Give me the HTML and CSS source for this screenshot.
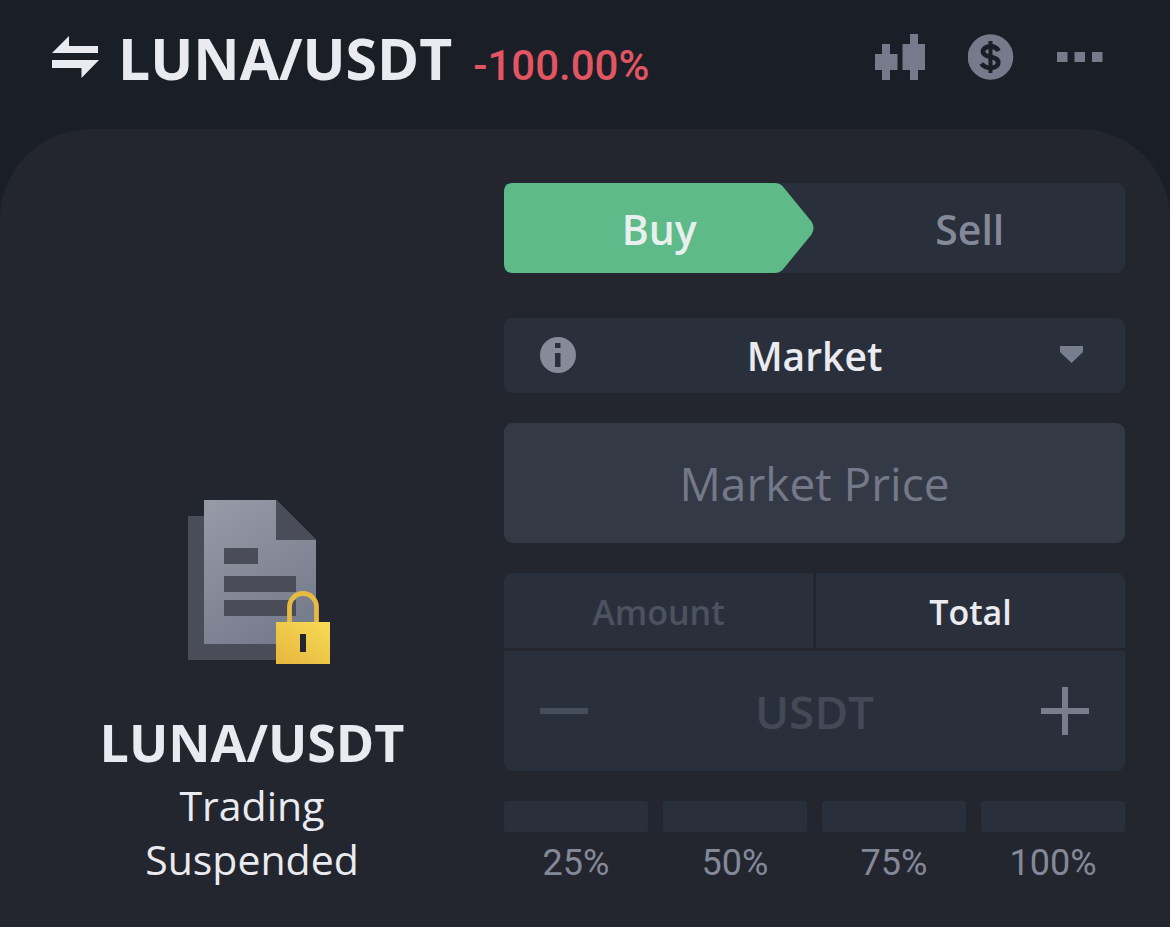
FILE: index.html
```html
<!DOCTYPE html>
<html lang="en">
<head>
<meta charset="utf-8">
<meta name="viewport" content="width=device-width, initial-scale=1">
<title>LUNA/USDT</title>
<link rel="stylesheet" href="styles.css">
</head>
<body>
<header class="topbar">
  <button class="icon-button" type="button" aria-label="Switch pair">
    <svg width="48" height="44" viewBox="0 0 48 44" fill="currentColor"><path d="M0 18 17 1V11H46V18ZM0 25H47L29.500 43V33H0Z"/></svg>
  </button>
  <h1 class="pair">LUNA/USDT</h1>
  <span class="change">-100.00%</span>
  <nav class="actions" aria-label="Tools">
    <button class="icon-button" type="button" aria-label="Chart">
      <svg width="50" height="46" viewBox="0 0 50 46" fill="currentColor"><path d="M7 10h8v10h7.500v16H15v10H7V36H0V20h7ZM35 0h8v10h7v26h-7v10h-8V36h-7.500V10H35Z"/></svg>
    </button>
    <button class="icon-button" type="button" aria-label="Currency">
      <svg width="46" height="46" viewBox="0 0 46 46"><circle cx="22.500" cy="23" r="22.800" fill="currentColor"/><path d="M30.500 17C29 14 26 12.500 22.500 12.500C18 12.500 15 14.500 15 17.500C15 21 18 22 22.500 22.800C27 23.600 30.200 24.800 30.200 28.400C30.200 31.700 27 33.800 22.500 33.800C18.500 33.800 15.300 32.300 13.500 29.500" fill="none" stroke="#1a1e26" stroke-width="4.800"/><path d="M22.500 7v32" stroke="#1a1e26" stroke-width="4"/></svg>
    </button>
    <button class="icon-button" type="button" aria-label="More">
      <svg width="46" height="46" viewBox="0 0 46 46" fill="currentColor"><path d="M0 18h10.500v10H0ZM17.500 18H28v10H17.500ZM35 18h10.500v10H35Z"/></svg>
    </button>
  </nav>
</header>
<main class="panel">
  <section class="notice">
    <svg class="notice-art" width="164" height="164" viewBox="0 0 164 164">
      <defs>
        <linearGradient id="paper" x1="0" y1="0" x2="0.500" y2="1"><stop offset="0" stop-color="#969ba8"/><stop offset="1" stop-color="#777d8c"/></linearGradient>
        <linearGradient id="gold" x1="1" y1="0" x2="0.200" y2="1"><stop offset="0" stop-color="#f8db56"/><stop offset="1" stop-color="#e7b93f"/></linearGradient>
      </defs>
      <path d="M18 16h92v144H18Z" fill="#4a4d57"/>
      <path d="M34 0h72l40 40v104H34Z" fill="url(#paper)"/>
      <path d="M106 0l40 40h-40ZM54 48h34v16H54ZM54 76h72v16H54ZM54 100h72v16H54Z" fill="#4a4d57"/>
      <path d="M119.500 123v-16a13.500 13.500 0 0 1 27 0v16" fill="none" stroke="#e7bb43" stroke-width="4.800"/>
      <path d="M106 122h54v42h-54Z" fill="url(#gold)"/>
      <path d="M130 134h6v18h-6Z" fill="#23262f"/>
    </svg>
    <h2 class="notice-pair">LUNA/USDT</h2>
    <p class="notice-text">Trading<br>Suspended</p>
  </section>
  <form class="order">
    <div class="sides">
      <button class="side side-buy" type="button">
        <svg class="side-shape" viewBox="0 0 310 90" preserveAspectRatio="none" aria-hidden="true"><path d="M9 0H270Q275 0 278 3L307 38.500Q311 45 307 51.500L278 87Q275 90 270 90H9Q0 90 0 81V9Q0 0 9 0Z" fill="#5fba89"/></svg>
        <span class="side-label">Buy</span>
      </button>
      <button class="side" type="button">Sell</button>
    </div>
    <div class="kind">
      <svg width="36" height="38" viewBox="0 0 36 38"><circle cx="18" cy="18" r="18" fill="#868b99"/><path d="M15 6h5.500v5H15ZM15 16h5.500v14H15Z" fill="#2a303b"/></svg>
      <select class="kind-select" aria-label="Order type"><option>Market</option></select>
      <svg class="caret" width="24" height="20" viewBox="0 0 24 20"><path d="M0 0H23V6L11.500 17 0 6Z" fill="#777e8d"/></svg>
    </div>
    <input class="price" type="text" placeholder="Market Price" aria-label="Price" disabled>
    <div class="quantity">
      <button class="unit" type="button">Amount</button>
      <button class="unit unit-active" type="button">Total</button>
      <div class="stepper">
        <button class="icon-button minus" type="button" aria-label="Decrease"><svg width="48" height="48" viewBox="0 0 48 48"><path d="M0 24h48" stroke="currentColor" stroke-width="6"/></svg></button>
        <input class="total" type="text" placeholder="USDT" aria-label="Total in USDT">
        <button class="icon-button" type="button" aria-label="Increase"><svg width="48" height="48" viewBox="0 0 48 48"><path d="M0 24h48M24 0v48" stroke="currentColor" stroke-width="6"/></svg></button>
      </div>
    </div>
    <div class="shares">
      <button class="share" type="button">25%</button>
      <button class="share" type="button">50%</button>
      <button class="share" type="button">75%</button>
      <button class="share" type="button">100%</button>
    </div>
  </form>
</main>
</body>
</html>
```
FILE: styles.css
```css
* { box-sizing: border-box; }

body {
  margin: 0;
  min-height: 100vh;
  display: flex;
  flex-direction: column;
  background: #1a1e26;
  color: #eaebf0;
  font-family: "Open Sans", "Noto Sans", sans-serif;
}

h1, h2, p { margin: 0; }
svg { display: block; flex: none; }

button, input, select {
  margin: 0;
  padding: 0;
  border: 0;
  background: none;
  color: inherit;
  font: inherit;
}

.icon-button { color: inherit; }

.topbar {
  display: flex;
  align-items: center;
  height: 129px;
  padding: 0 67px 15px 52px;
}

.pair {
  margin-left: 18px;
  padding-top: 2px;
  font-size: 57px;
  line-height: 80px;
  font-weight: 700;
}

.change {
  margin: 18px 0 0 21px;
  color: #e25563;
  font-family: Roboto, sans-serif;
  font-size: 42px;
  line-height: 48px;
  font-weight: 500;
}

.actions {
  display: flex;
  gap: 43px;
  margin-left: auto;
  color: #757b8b;
}

.panel {
  flex: 1;
  display: grid;
  grid-template-columns: 2fr 3fr;
  gap: 45px;
  padding: 54px 45px 40px;
  border-radius: 90px 90px 0 0;
  background: #23262f;
}

.notice {
  display: flex;
  flex-direction: column;
  align-items: center;
  justify-content: flex-end;
  padding-bottom: 1px;
  text-align: center;
}

.notice-pair {
  margin-top: 42px;
  font-size: 52px;
  line-height: 72px;
  font-weight: 700;
}

.notice-text {
  font-size: 41px;
  line-height: 54px;
}

.order {
  display: flex;
  flex-direction: column;
  min-width: 0;
}

.sides {
  display: grid;
  grid-template-columns: 1fr 1fr;
  height: 90px;
  border-radius: 9px;
  background: #2a303b;
}

.side {
  padding-top: 2px;
  color: #848999;
  font-size: 41px;
  font-weight: 600;
}

.side-buy {
  display: grid;
  align-items: center;
  padding-top: 0;
  color: #e8f0ee;
}

.side-shape, .side-label { grid-area: 1 / 1; }
.side-shape { width: 100%; height: 90px; }
.side-label { z-index: 1; padding-top: 2px; }

.kind {
  display: flex;
  align-items: center;
  height: 75px;
  margin-top: 45px;
  padding: 0 41px 0 36px;
  border-radius: 9px;
  background: #2a303b;
}

.kind-select {
  flex: 1;
  min-width: 0;
  margin-right: 7px;
  appearance: none;
  font-size: 39px;
  font-weight: 600;
  text-align: center;
  text-align-last: center;
}

.price {
  width: 100%;
  height: 120px;
  margin-top: 30px;
  border-radius: 9px;
  background: #343a45;
  font-size: 46px;
  text-align: center;
}

.price::placeholder { color: #737989; opacity: 1; }

.quantity {
  display: grid;
  grid-template-columns: 1fr 1fr;
  grid-template-rows: 75px 120px;
  gap: 3px;
  margin-top: 30px;
  overflow: hidden;
  border-radius: 9px;
}

.unit {
  padding-top: 2px;
  background: #2a303b;
  color: #4c5260;
  font-size: 34px;
  font-weight: 600;
}

.unit-active { color: #eaebf0; }

.stepper {
  grid-column: 1 / -1;
  display: flex;
  align-items: center;
  padding: 0 36px;
  background: #2a303b;
  color: #787e8e;
}

.minus { color: #474e5b; }

.total {
  flex: 1;
  min-width: 0;
  font-size: 46px;
  font-weight: 600;
  text-align: center;
}

.total::placeholder { color: #434956; opacity: 1; }

.shares {
  display: grid;
  grid-template-columns: repeat(4, 1fr);
  gap: 15px;
  margin-top: 30px;
}

.share {
  color: #848999;
  font-family: Roboto, sans-serif;
  font-size: 36px;
  line-height: 42px;
}

.share::before {
  content: "";
  display: block;
  height: 31px;
  margin-bottom: 10px;
  border-radius: 3px;
  background: #2a303b;
}
```
